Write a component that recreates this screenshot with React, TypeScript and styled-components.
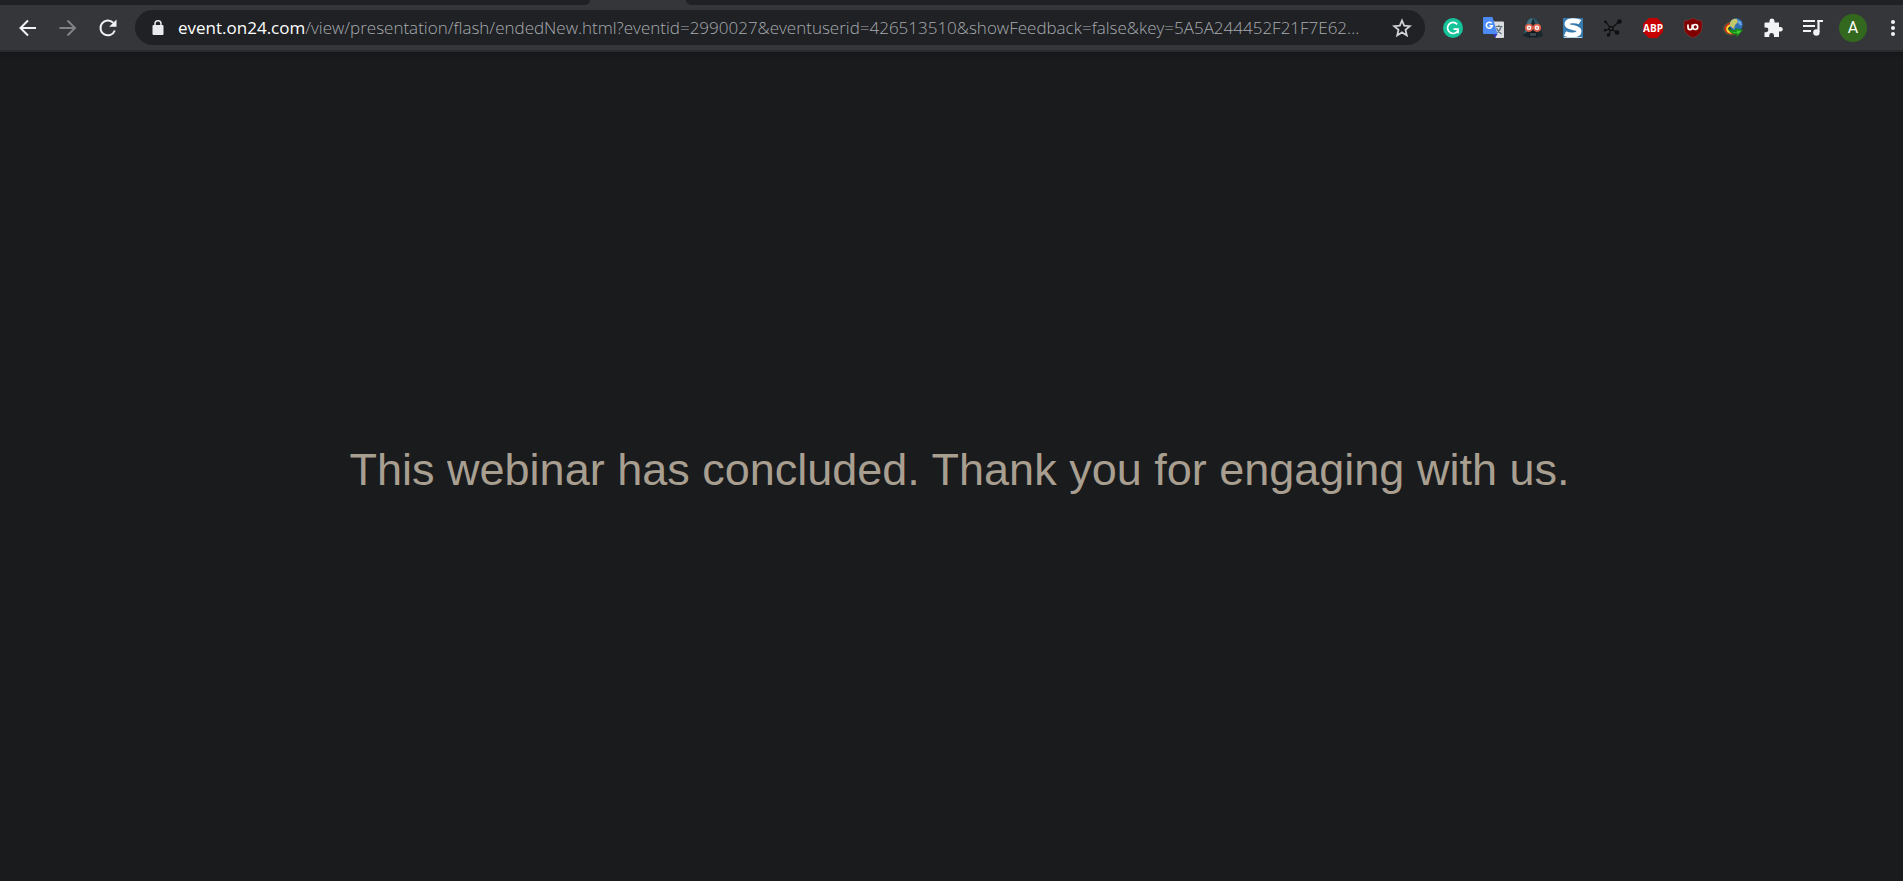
import React from "react";
import styled, { createGlobalStyle } from "styled-components";

const GlobalStyle = createGlobalStyle`
  * { box-sizing: border-box; }
  body { margin: 0; background: #1a1b1d; }
`;

const Window = styled.div`
  display: flex;
  flex-direction: column;
  min-height: 100vh;
  background: #1a1b1d;
`;

const TabStrip = styled.div`
  display: flex;
  height: 5px;
  background: #35363a;
`;

const InactiveTabs = styled.div<{ $side: "left" | "right" }>`
  flex: ${(p) => (p.$side === "left" ? "0 0 31%" : "1")};
  margin-left: ${(p) => (p.$side === "right" ? "96px" : "0")};
  background: #202124;
  border-radius: ${(p) => (p.$side === "left" ? "0 0 7px 0" : "0 0 0 7px")};
`;

const Toolbar = styled.header`
  display: flex;
  align-items: center;
  height: 47px;
  padding: 0 0 0 8px;
  background: #35363a;
  border-bottom: 2px solid #28292c;
`;

const IconButton = styled.button<{ $dim?: boolean }>`
  display: flex;
  flex: none;
  align-items: center;
  justify-content: center;
  width: 40px;
  height: 36px;
  padding: 0;
  border: 0;
  background: none;
  color: ${(p) => (p.$dim ? "#818285" : "#f1f3f4")};
`;

const MenuButton = styled(IconButton)`
  width: 30px;
  justify-content: flex-end;
  padding-right: 8px;
`;

const AddressBar = styled.div`
  display: flex;
  flex: 1;
  align-items: center;
  min-width: 0;
  height: 35px;
  margin: 0 8px 0 7px;
  padding: 0 3px;
  border-radius: 18px;
  background: #202124;
`;

const Url = styled.div`
  flex: 1;
  min-width: 0;
  overflow: hidden;
  white-space: nowrap;
  color: #a6abb0;
  font: 300 17px/28px "Open Sans", sans-serif;
`;

const Host = styled.span`
  color: #ffffff;
  font-weight: 400;
`;

const Avatar = styled.span`
  width: 28px;
  height: 28px;
  border-radius: 50%;
  background: #33691e;
  color: #ffffff;
  font: 16px/28px Roboto, sans-serif;
  text-align: center;
`;

const Page = styled.main`
  display: flex;
  flex: 1;
  align-items: center;
  justify-content: center;
  padding: 6px 0 0 16px;
  background: linear-gradient(#161718, #1a1b1d 8px);
`;

const Message = styled.h1`
  margin: 0;
  color: #a89f91;
  font: 45px/52px "Liberation Sans", Arial, sans-serif;
  text-align: center;
`;

const Svg = ({ size = 20, box = 20, children }: { size?: number; box?: number; children: React.ReactNode }) => (
  <svg width={size} height={size} viewBox={`0 0 ${box} ${box}`} fill="none" aria-hidden="true">
    {children}
  </svg>
);

const Back = () => (
  <Svg><path d="M18 10H3M10 2.5 2.5 10l7.5 7.5" stroke="currentColor" strokeWidth="2" /></Svg>
);
const Forward = () => (
  <Svg><path d="M1.5 10h15M9.500 2.500 17 10l-7.500 7.500" stroke="currentColor" strokeWidth="2" /></Svg>
);
const Reload = () => (
  <Svg>
    <path d="M16.800 12.500A7.400 7.400 0 1 1 15.200 4.800" stroke="currentColor" strokeWidth="2" />
    <path d="M18.500 1.500v7.300h-7.300z" fill="currentColor" />
  </Svg>
);
const Lock = () => (
  <Svg>
    <rect x="4.500" y="7" width="11" height="10" rx="1" fill="#e8eaed" />
    <path d="M7 8V5.800a3 3 0 0 1 6 0V8" stroke="#e8eaed" strokeWidth="1.500" />
  </Svg>
);
const Star = () => (
  <Svg>
    <path d="m10 2.500 2.200 5.200 5.600.5-4.300 3.700 1.300 5.500-4.800-3-4.800 3 1.300-5.500-4.300-3.700 5.600-.5z" stroke="#d0d2d5" strokeWidth="1.800" />
  </Svg>
);
const Grammarly = () => (
  <Svg>
    <circle cx="10" cy="10" r="10" fill="#15c39a" />
    <path d="M14.200 6.400A5.500 5.500 0 1 0 15 12.300" stroke="#fff" strokeWidth="1.700" />
    <path d="M10.500 11.200H15v4" stroke="#fff" strokeWidth="1.700" />
  </Svg>
);
const Translate = () => (
  <Svg size={21} box={21}>
    <path d="M9 4.500h11q1 0 1 1V20q0 1-1 1h-7.500z" fill="#dadce0" />
    <path d="M12.500 9.500h7M15.800 8v1.500M18 10q-1 4-5 6M13.500 11q1.500 4 5 6" stroke="#5f7178" strokeWidth="1.200" />
    <path d="m10 17 4.500 0-2.500 4z" fill="#3830b8" />
    <path d="M1 0h8.500l5 17H1q-1 0-1-1V1q0-1 1-1z" fill="#4c8bf5" />
    <path d="M8.600 6.300a3 3 0 1 0 .7 2.400H6.500" stroke="#fff" strokeWidth="1.500" />
  </Svg>
);
const Vader = () => (
  <Svg>
    <path d="M10 0C5.500 0 3.500 3.500 3 7.500L0 18l4 1.500h12l4-1.500-3-10.500C16.500 3.500 14.500 0 10 0z" fill="#1b272e" />
    <path d="M10 0C5.500 0 3.700 3.500 3.200 7.500L1 16l3.500-3L8 6z" fill="#40707f" />
    <path d="M10 0c3 0 5.500 2 6.500 7L12 6z" fill="#2f5564" />
    <path d="m7 13 3-2.500 3 2.500 1 6H6z" fill="#10181d" />
    <path d="M8 15v3m2-3v3m2-3v3" stroke="#78909c" strokeWidth=".8" />
    <circle cx="6" cy="9.800" r="3.200" fill="#fff" stroke="#d9604a" strokeWidth="1.800" />
    <circle cx="14" cy="9.800" r="3.200" fill="#fff" stroke="#d9604a" strokeWidth="1.800" />
    <circle cx="6" cy="9.800" r="1" fill="#c98a7c" />
    <circle cx="14" cy="9.800" r="1" fill="#c98a7c" />
  </Svg>
);
const Stylish = () => (
  <Svg>
    <rect width="20" height="20" fill="#377bae" />
    <path d="M17 4.200C14 2.300 4 1.500 4 6.300c0 4 12 2.500 12 6.800 0 5-10 4.400-14 2.500" stroke="#fff" strokeWidth="5" />
    <path d="M1 19.500h18" stroke="#b9d2e4" />
  </Svg>
);
const Nodes = () => (
  <Svg>
    <path d="m8 11 7.500-7M8 11l6 3.500M8 11l-5-7M8 11l-6 1M8 11l-2 6" stroke="#0e0f10" strokeWidth="1.200" />
    <circle cx="8" cy="10.500" r="2.500" fill="#0e0f10" />
    <circle cx="8" cy="10.500" r="1" fill="#48494d" />
    <circle cx="16.500" cy="3.500" r="2.300" fill="#0e0f10" />
    <circle cx="14" cy="14.500" r="2.300" fill="#0e0f10" />
    <circle cx="2.500" cy="4" r="1.400" fill="#0e0f10" />
    <circle cx="2.200" cy="12.200" r="1.300" fill="#0e0f10" />
    <circle cx="5.500" cy="17" r="1.700" fill="#0e0f10" />
  </Svg>
);
const AdBlock = () => (
  <Svg>
    <path d="M6 0h8l6 6v8l-6 6H6l-6-6V6z" fill="#c70000" />
    <text x="10" y="13.500" textAnchor="middle" fill="#fff" fontFamily="Open Sans, sans-serif" fontWeight="700" fontSize="10">ABP</text>
  </Svg>
);
const Shield = () => (
  <Svg>
    <path d="M10 0q4 2.500 9 3v7q0 6-9 10Q1 16 1 10V3Q6 2.500 10 0z" fill="#800000" stroke="#7f4347" strokeWidth=".6" />
    <path d="M5 6.500v3a2.100 2.100 0 0 0 4.200 0v-3" stroke="#fff" strokeWidth="1.700" />
    <ellipse cx="12.300" cy="9" rx="2.400" ry="2.500" stroke="#fff" strokeWidth="1.600" />
  </Svg>
);
const Downloader = () => (
  <Svg>
    <path d="M9 3.500C3 5 0 8.500 1 12c1.500 5 8 6 13 3.500" stroke="#3f5a3a" strokeWidth="1.500" />
    <path d="M9 4.500C4 6 1.500 9 2.500 12c1.500 4 7 4.500 12 2.500" stroke="#d9281e" strokeWidth="1.800" />
    <path d="M9 6.500C5.500 7.500 3.500 9.500 4.200 11.800c1 2.700 5 3.200 9.500 1.700" stroke="#ffd22e" strokeWidth="2" />
    <circle cx="13.200" cy="6.700" r="6.500" fill="#2f6fb8" />
    <path d="M7 5q2-5 7-4l1 3-3 3-1 4-4-3z" fill="#c2c768" />
    <path d="m14 2 4 1.500 1 4-3-1z" fill="#70a8db" />
    <path d="M5.500 9.500c2.500 3 4.500 3 7.500 2l-1-1.500 8 2-6.500 7.500.2-3.500C9 17 5.500 14 5.500 9.500z" fill="#178a1a" />
    <path d="M7.500 12.500c2 2 4 2 6.500 1.500l-.5-1.500 5 .3-4 4v-2c-3 .7-5.500 0-7-2.300z" fill="#3fd02f" />
  </Svg>
);
const Puzzle = () => (
  <Svg>
    <path d="M2.500 4.500h4V3a2.500 2.500 0 0 1 5 0v1.500H16V9h1.500a2.300 2.300 0 0 1 0 4.600H16V19h-5v-1.500a2.400 2.400 0 0 0-4.800 0V19H1.500v-4.800H3a2.400 2.400 0 0 0 0-4.800H1.500V5.500q0-1 1-1z" fill="#f1f3f4" />
  </Svg>
);
const Media = () => (
  <Svg>
    <path d="M0 3h12M0 8h12M0 13h8M14.500 3H20" stroke="#f1f3f4" strokeWidth="2.200" />
    <path d="M15.500 2v12" stroke="#f1f3f4" strokeWidth="2.200" />
    <circle cx="13.400" cy="14.500" r="3.200" fill="#f1f3f4" />
  </Svg>
);

const extensions = [
  { name: "Grammarly", Icon: Grammarly },
  { name: "Translate", Icon: Translate },
  { name: "Dark mode", Icon: Vader },
  { name: "Stylish", Icon: Stylish },
  { name: "Network", Icon: Nodes },
  { name: "Adblock Plus", Icon: AdBlock },
  { name: "Ad shield", Icon: Shield },
  { name: "Download manager", Icon: Downloader },
  { name: "Extensions", Icon: Puzzle },
  { name: "Media control", Icon: Media },
];

export default function App() {
  return (
    <Window>
      <GlobalStyle />
      <TabStrip>
        <InactiveTabs $side="left" />
        <InactiveTabs $side="right" />
      </TabStrip>
      <Toolbar>
        <IconButton aria-label="Back"><Back /></IconButton>
        <IconButton aria-label="Forward" $dim><Forward /></IconButton>
        <IconButton aria-label="Reload"><Reload /></IconButton>
        <AddressBar>
          <IconButton aria-label="Site information"><Lock /></IconButton>
          <Url role="textbox" aria-label="Address" tabIndex={0}>
            <Host>event.on24.com</Host>
            /view/presentation/flash/endedNew.html?eventid=2990027&amp;eventuserid=426513510&amp;showFeedback=false&amp;key=5A5A244452F21F7E62...
          </Url>
          <IconButton aria-label="Bookmark"><Star /></IconButton>
        </AddressBar>
        {extensions.map(({ name, Icon }) => (
          <IconButton key={name} aria-label={name}><Icon /></IconButton>
        ))}
        <IconButton aria-label="Profile"><Avatar>A</Avatar></IconButton>
        <MenuButton aria-label="Menu">
          <svg width="4" height="18" viewBox="0 0 4 18" fill="currentColor" aria-hidden="true">
            <circle cx="2" cy="3" r="2" />
            <circle cx="2" cy="9" r="2" />
            <circle cx="2" cy="15" r="2" />
          </svg>
        </MenuButton>
      </Toolbar>
      <Page>
        <Message>This webinar has concluded. Thank you for engaging with us.</Message>
      </Page>
    </Window>
  );
}
